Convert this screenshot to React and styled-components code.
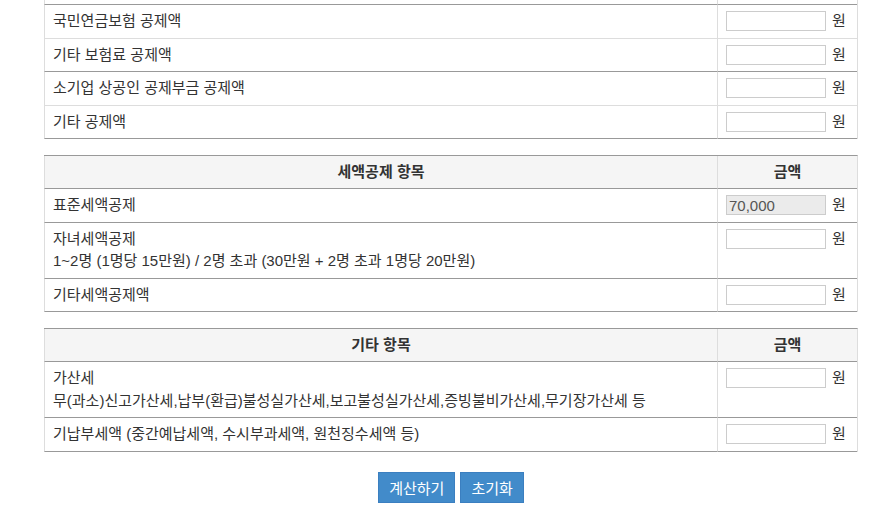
import React from 'react';
import styled, { createGlobalStyle } from 'styled-components';

const GlobalStyle = createGlobalStyle`
  html, body {
    margin: 0;
    padding: 0;
    background: #fff;
  }
  body {
    font-family: "Liberation Sans", "Noto Sans CJK KR", sans-serif;
    font-size: 15px;
    color: #333;
  }
`;

const deductions = [
  { label: '건강보험료 공제액', strong: true },
  { label: '국민연금보험 공제액' },
  { label: '기타 보험료 공제액', strong: true },
  { label: '소기업 상공인 공제부금 공제액' },
  { label: '기타 공제액', strong: true },
];

const taxCredits = [
  { label: '표준세액공제', value: '70,000', disabled: true },
  { label: '자녀세액공제', sub: '1~2명 (1명당 15만원) / 2명 초과 (30만원 + 2명 초과 1명당 20만원)' },
  { label: '기타세액공제액' },
];

const others = [
  { label: '가산세', sub: '무(과소)신고가산세,납부(환급)불성실가산세,보고불성실가산세,증빙불비가산세,무기장가산세 등' },
  { label: '기납부세액 (중간예납세액, 수시부과세액, 원천징수세액 등)' },
];

function AmountInput({ value, disabled }) {
  return (
    <AmountCell>
      <Field>
        <Input type="text" defaultValue={value || ''} disabled={disabled} $disabled={disabled} />
        <Won>원</Won>
      </Field>
    </AmountCell>
  );
}

function Section({ title, rows, allStrong }) {
  return (
    <Table>
      {title && (
        <thead>
          <Row $strong>
            <HeadCell><Line>{title}</Line></HeadCell>
            <HeadCell><Line>금액</Line></HeadCell>
          </Row>
        </thead>
      )}
      <tbody>
        {rows.map((r) => (
          <Row key={r.label} $strong={allStrong || r.strong}>
            <Cell>
              <Line>{r.label}</Line>
              {r.sub && <Line>{r.sub}</Line>}
            </Cell>
            <AmountInput value={r.value} disabled={r.disabled} />
          </Row>
        ))}
      </tbody>
    </Table>
  );
}

export default function App() {
  return (
    <>
      <GlobalStyle />
      <Container>
        <Section rows={deductions} />
        <Section title="세액공제 항목" rows={taxCredits} allStrong />
        <Section title="기타 항목" rows={others} allStrong />
        <ButtonBar>
          <Button type="button">계산하기</Button>
          <Button type="button">초기화</Button>
        </ButtonBar>
      </Container>
    </>
  );
}

// page is scrolled a little: the first deduction row sits above the fold
const Container = styled.section`
  width: 814px;
  margin: -29.5px 0 0 44px;
`;

const Table = styled.table`
  width: 100%;
  table-layout: fixed;
  border-collapse: separate;
  border-spacing: 0;
  border-top: 1px solid #999;
  border-right: 1px solid #ddd;
  margin-bottom: 15.5px;
`;

const Row = styled.tr`
  & > td,
  & > th {
    border-bottom: 1px solid ${(p) => (p.$strong ? '#999' : '#ddd')};
  }
`;

const Cell = styled.td`
  border-left: 1px solid #ddd;
  padding: 5px 8px;
  vertical-align: top;
  text-align: left;
`;

const Line = styled.div`
  height: 22.5px;
  line-height: 22.5px;
  white-space: nowrap;
`;

const HeadCell = styled.th`
  border-left: 1px solid #ddd;
  background: #f5f5f5;
  padding: 5px 8px;
  font-weight: bold;
  color: #333;
  text-align: center;

  &:last-child {
    width: 123px;
  }
`;

const AmountCell = styled(Cell)`
  width: 123px;
`;

const Field = styled.div`
  display: flex;
  align-items: center;
  height: 22.5px;
  white-space: nowrap;
`;

const Input = styled.input`
  box-sizing: border-box;
  width: 100px;
  height: 20px;
  margin: 0;
  padding: 0 2px;
  border: 1px solid #ccc;
  background: ${(p) => (p.$disabled ? '#ebebeb' : '#fff')};
  color: #555;
  font-family: inherit;
  font-size: 15px;
`;

const Won = styled.span`
  margin-left: 6px;
  line-height: 20px;
`;

const ButtonBar = styled.div`
  display: flex;
  justify-content: center;
  gap: 5px;
  margin-top: 20px;
`;

const Button = styled.button`
  height: 31px;
  padding: 0 10px;
  border: 1px solid #3b7fc0;
  border-radius: 0;
  background: #428bca;
  color: #fff;
  font-family: inherit;
  font-size: 15px;
`;
